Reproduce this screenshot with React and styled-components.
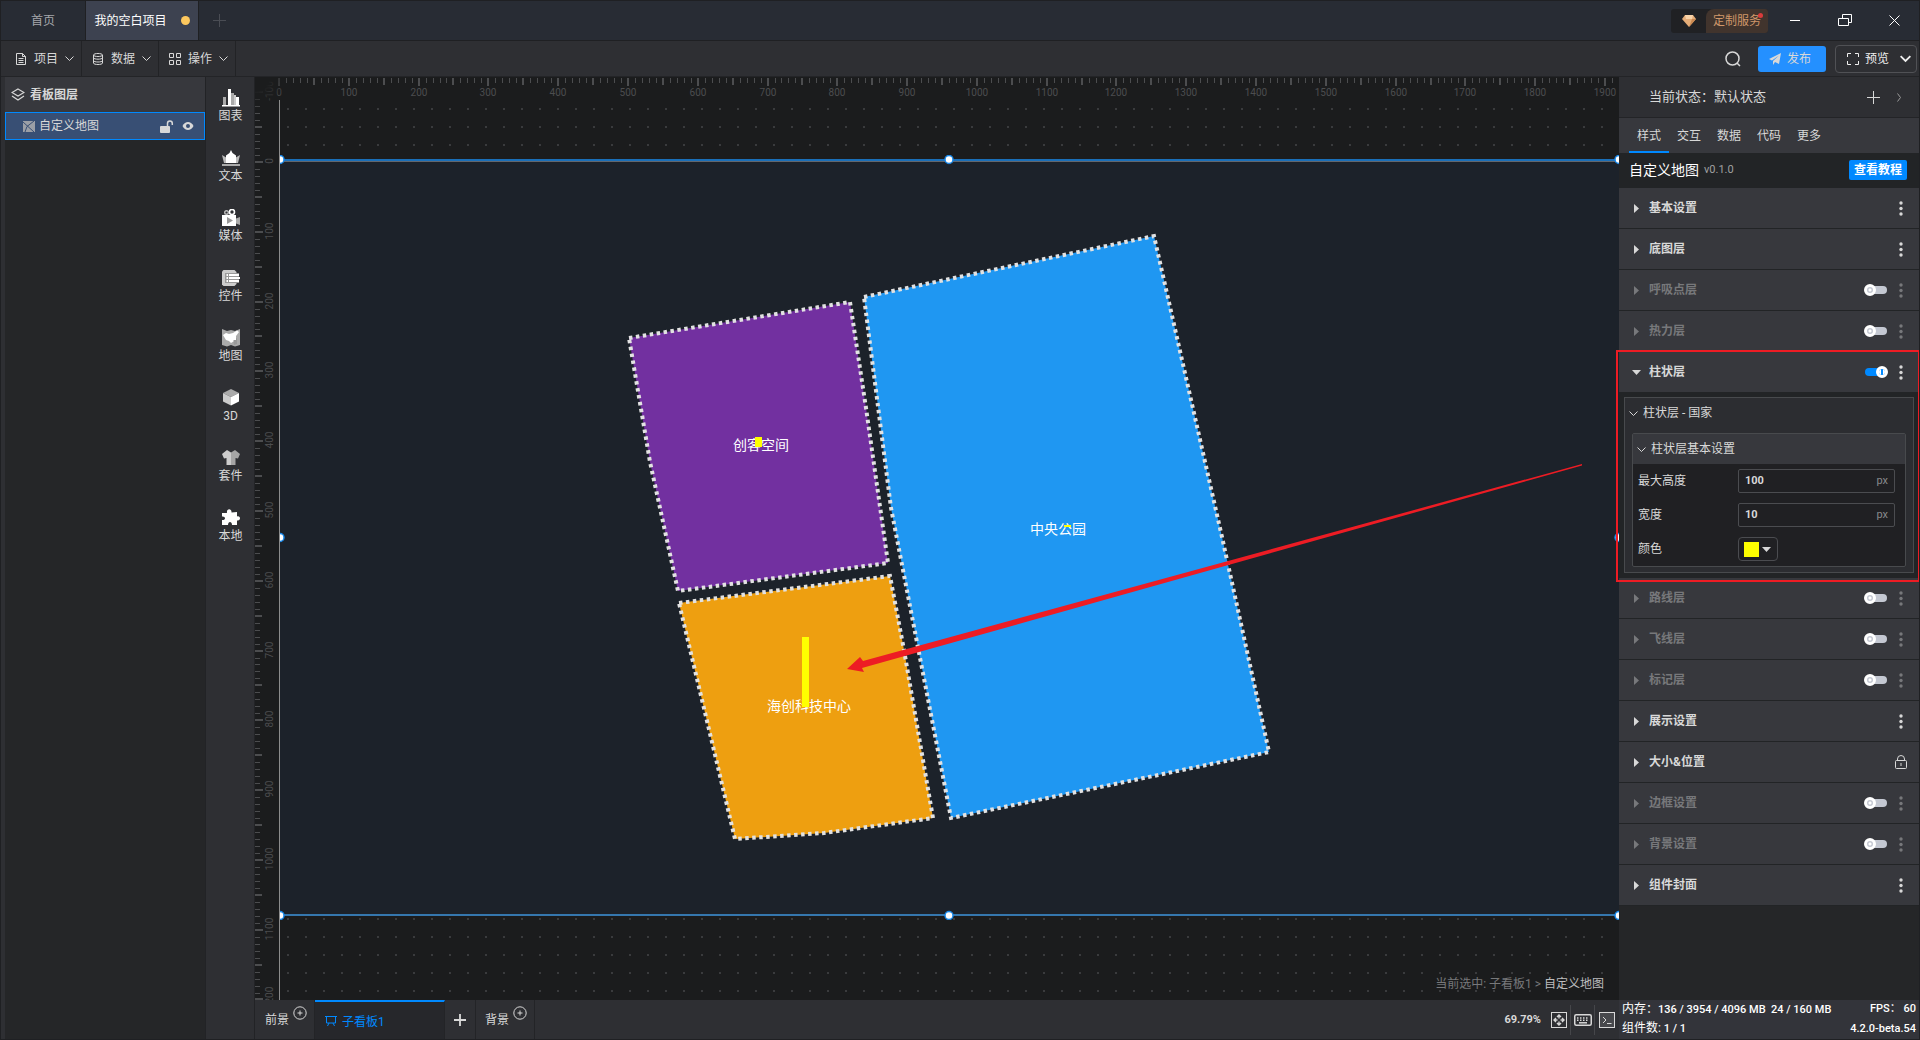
import React, { useState } from 'react'
import styled, { createGlobalStyle, css } from 'styled-components'

const GlobalStyle = createGlobalStyle`
  *, ::before, ::after {
    box-sizing: border-box;
  }

  body {
    margin: 0;
    background: #1f2023;
    color: #d8d8d8;
    font-family: Roboto, "Noto Sans CJK SC", sans-serif;
    font-size: 12px;
    line-height: 16px;
  }

  button, input {
    margin: 0;
    padding: 0;
    border: 0;
    background: none;
    color: inherit;
    font: inherit;
  }

  svg {
    display: block;
    flex: none;
  }
`

const Window = styled.div`
  display: flex;
  flex-direction: column;
  height: 100vh;
  border: 1px solid #1f2023;
  background: #2e2f33;
  overflow: hidden;
`

/* title bar */

const TitleBar = styled.header`
  display: flex;
  align-items: center;
  flex: none;
  height: 40px;
  border-bottom: 1px solid #1f2023;
  background: #282c34;
`

const WindowTab = styled.button`
  display: flex;
  align-items: center;
  justify-content: center;
  gap: 14px;
  align-self: stretch;
  width: ${p => p.$active ? 113 : 85}px;
  border-right: 1px solid #1f2023;
  background: ${p => p.$active ? '#3d4250' : 'transparent'};
  color: ${p => p.$active ? '#fff' : '#a5a7ab'};
`

const UnsavedDot = styled.span`
  width: 9px;
  height: 9px;
  border-radius: 50%;
  background: #fdc85e;
`

const IconButton = styled.button`
  display: flex;
  align-items: center;
  justify-content: center;
  width: ${p => p.$w || 24}px;
  height: 24px;
  color: ${p => p.$color || '#d8d8d8'};
`

const Spacer = styled.div`
  flex: 1;
`

const ServiceButton = styled.button`
  position: relative;
  display: flex;
  align-items: stretch;
  width: 97px;
  height: 24px;
  margin-right: 2px;
  border-radius: 3px;
  background: #202124;
  color: #d0976a;

  svg {
    margin: 4px 10px 4px 11px;
  }

  span {
    flex: 1;
    border-radius: 8px 3px 3px 0;
    background: #41342d;
    line-height: 25px;
  }
`

const RedDot = styled.i`
  position: absolute;
  top: 4px;
  right: 5px;
  width: 5px;
  height: 5px;
  border-radius: 50%;
  background: #d93b3b;
`

/* menu bar */

const MenuBar = styled.nav`
  display: flex;
  align-items: center;
  flex: none;
  height: 36px;
  border-bottom: 1px solid #232427;
  background: #2e2f33;
`

const MenuButton = styled.button`
  display: flex;
  align-items: center;
  align-self: stretch;
  gap: 7px;
  width: ${p => p.$first ? 81 : 77}px;
  padding-left: ${p => p.$first ? 13 : 9}px;
  border-right: 1px solid #222326;
`

const PublishButton = styled.button`
  display: flex;
  align-items: center;
  gap: 6px;
  width: 68px;
  height: 26px;
  margin: 0 9px 0 13px;
  padding-left: 11px;
  border-radius: 3px;
  background: #2490ff;
`

const PreviewButton = styled.button`
  display: flex;
  align-items: center;
  width: 82px;
  height: 28px;
  margin-right: 2px;
  padding-left: 11px;
  gap: 6px;
  border: 1px solid #505155;
  border-radius: 4px;
  color: #eee;

  span {
    width: 29px;
    text-align: left;
  }
`

/* body */

const Body = styled.div`
  display: flex;
  flex: 1;
  min-height: 0;
`

const Layers = styled.aside`
  flex: none;
  width: 201px;
  margin-left: 4px;
  border-right: 1px solid #222326;
  background: #252628;
`

const LayersTitle = styled.h2`
  display: flex;
  align-items: center;
  gap: 5px;
  height: 35px;
  margin: 0;
  padding-left: 6px;
  background: #37383d;
  font-size: 12px;
  font-weight: 700;
`

const LayerRow = styled.div`
  display: flex;
  align-items: center;
  height: 28px;
  padding: 0 10px 0 17px;
  border: 1px solid #0089ff;
  background: #384f74;

  span {
    flex: 1;
    margin-left: 4px;
  }

  button + button {
    margin-left: 8px;
  }
`

const LayerButton = styled.button`
  color: #d8d8d8;
`

const Rail = styled.nav`
  display: flex;
  flex-direction: column;
  flex: none;
  width: 49px;
  padding-left: 1px;
  border-right: 1px solid #222326;
  background: #2e2f33;
`

const RailButton = styled.button`
  display: flex;
  flex-direction: column;
  align-items: center;
  gap: 1px;
  height: 60px;
  padding-top: 12px;
`

const Center = styled.main`
  display: flex;
  flex-direction: column;
  flex: 1;
  min-width: 0;
`

const Workspace = styled.div`
  display: grid;
  grid-template-columns: 24px minmax(0, 1fr);
  grid-template-rows: 23px minmax(0, 1fr);
  flex: 1;
  min-height: 0;
  overflow: hidden;
  background: #1b1c1d;
`

const TopRuler = styled.svg`
  grid-area: 1 / 1 / 2 / 3;
  width: 100%;
  height: 23px;
`

const SideRuler = styled.svg`
  grid-area: 1 / 1 / 3 / 2;
  width: 24px;
  height: 100%;
`

const RulerCorner = styled.div`
  grid-area: 1 / 1 / 2 / 2;
  z-index: 1;
  width: 40px;
  height: 40px;
  background: radial-gradient(circle at 0 0, #1b1c1d 14px, transparent 34px);
`

const Stage = styled.div`
  position: relative;
  grid-area: 2 / 2 / 3 / 3;
  padding-top: 55px;
  border-left: 1px solid #8c8c8c;
  background: radial-gradient(circle at 8px 9px, #3a3b3d 1px, transparent 1px) 0 0 / 18px 18px;
  overflow: hidden;
`

const Breadcrumb = styled.p`
  position: absolute;
  right: 15px;
  bottom: 8px;
  margin: 0;
  color: #77787a;

  b {
    color: #bdbdbd;
    font-weight: 400;
  }
`

const BoardBar = styled.footer`
  display: flex;
  flex: none;
  height: 39px;
  background: #2e2f33;
`

const BoardTab = styled.button`
  display: flex;
  align-items: center;
  gap: ${p => p.$active ? 5 : 4}px;
  width: ${p => p.$w}px;
  padding-left: ${p => p.$pad || 0}px;
  border-right: 1px solid #232427;
  ${p => p.$center && css`justify-content: center;`}
  ${p => p.$active && css`
    border-top: 2px solid #0089ff;
    background: #26272b;
    color: #0089ff;
  `}

  svg + span {
    padding-top: 2px;
  }

  span + svg {
    margin-top: -14px;
  }
`

const ZoomLevel = styled.span`
  align-self: center;
  margin-right: 6px;
  font-size: 11px;
  font-weight: 700;
`

const FooterButton = styled.button`
  display: flex;
  align-items: center;
  justify-content: center;
  align-self: center;
  width: 24px;
  height: 30px;
  border-right: ${p => p.$last ? 0 : 1}px solid #45464a;
`

/* right hand panel */

const Inspector = styled.aside`
  display: flex;
  flex-direction: column;
  flex: none;
  width: 300px;
  background: #252628;
`

const StateRow = styled.div`
  display: flex;
  align-items: center;
  flex: none;
  height: 41px;
  padding: 0 13px 0 30px;
  border-bottom: 1px solid #232427;
  background: #2e2f33;
  font-size: 13px;
`

const Tabs = styled.div`
  display: flex;
  flex: none;
  height: 35px;
  padding-left: 10px;
  background: #37383d;
`

const Tab = styled.button`
  width: 40px;
  padding-top: 2px;
  border-bottom: 2px solid ${p => p.$active ? '#0089ff' : 'transparent'};
`

const ComponentTitle = styled.div`
  display: flex;
  align-items: center;
  flex: none;
  height: 35px;
  padding: 0 12px 2px 10px;
  background: #222426;

  strong {
    color: #fff;
    font-size: 14px;
    font-weight: 400;
  }

  small {
    flex: 1;
    margin-left: 5px;
    color: #a0a0a0;
    font-size: 11px;
  }
`

const TutorialButton = styled.button`
  width: 58px;
  height: 20px;
  border-radius: 2px;
  background: #0089ff;
  color: #fff;
  font-weight: 700;
`

const Section = styled.section`
  position: relative;
  flex: none;
`

const SectionHead = styled.div`
  display: flex;
  align-items: center;
  height: ${p => p.$open ? 40 : 41}px;
  padding-right: 11px;
  border-bottom: ${p => p.$open ? 0 : 1}px solid #222426;
  background: #37383d;
  color: ${p => p.$off ? '#77787b' : '#d8d8d8'};
`

const SectionToggle = styled.button`
  display: flex;
  align-items: center;
  flex: 1;
  gap: 8px;
  height: 100%;
  padding-left: 13px;
  font-weight: 700;
`

const Switch = styled.input.attrs({ type: 'checkbox' })`
  appearance: none;
  display: flex;
  align-items: center;
  width: 24px;
  height: 12px;
  margin-right: 6px;

  &::before {
    content: "";
    flex: none;
    width: 22px;
    height: 8px;
    margin-left: 1px;
    border-radius: 4px;
    background: #c4c8d2;
  }

  &::after {
    content: "";
    flex: none;
    width: 12px;
    height: 12px;
    margin-left: -23px;
    border: 3px solid #fff;
    border-radius: 50%;
    background: radial-gradient(#fff 1px, #c4c8d2 2px, #c4c8d2 3px, #fff 4px) padding-box;
  }

  &:checked::before {
    background: #0089ff;
  }

  &:checked::after {
    margin-left: -11px;
    background: linear-gradient(90deg, #fff 2px, #0089ff 2px, #0089ff 4px, #fff 4px) padding-box;
  }
`

const MoreButton = styled.button`
  display: flex;
  justify-content: center;
  width: 14px;
`

const Highlight = styled.div`
  position: absolute;
  inset: -2px -1px -4px -3px;
  border: 2px solid #ed1c24;
  pointer-events: none;
  z-index: 2;
`

const SectionBody = styled.div`
  padding: 5px;
  background: #222426;
`

const Group = styled.div`
  padding: 0 7px 5px;
  border: 1px solid #484a4d;
  background: #2c2d31;
`

const GroupHead = styled.button`
  display: flex;
  align-items: center;
  gap: 5px;
  width: 100%;
  height: 30px;
  padding-left: 4px;
  ${p => p.$inner ? css`background: #37383d;` : css`
    margin: 0 0 5px -7px;
  `}
`

const SubGroup = styled.div`
  border: 1px solid #484a4d;
  border-radius: 2px;
  background: #202023;
`

const FormRow = styled.div`
  display: flex;
  align-items: center;
  height: 34px;
  padding: 0 10px 0 5px;

  label {
    width: 100px;
  }
`

const NumberBox = styled.span`
  display: flex;
  align-items: center;
  flex: 1;
  height: 24px;
  padding: 0 6px;
  border: 1px solid #4b4c50;
  border-radius: 2px;
  color: #88898c;
  font-size: 11px;

  input {
    flex: 1;
    width: 40px;
    outline: 0;
    color: #d8d8d8;
    font-weight: 700;
  }
`

const ColorButton = styled.button`
  display: flex;
  align-items: center;
  gap: 3px;
  width: 40px;
  height: 24px;
  padding-left: 5px;
  border: 1px solid #4b4c50;
  border-radius: 4px;
`

const Swatch = styled.i`
  width: 15px;
  height: 15px;
  background: ${p => p.$color};
`

const Stats = styled.dl`
  display: grid;
  grid-template-columns: 1fr auto;
  grid-template-rows: 18px 21px;
  align-items: center;
  flex: none;
  height: 39px;
  margin: auto 0 0;
  padding: 0 3px;
  background: #33343a;
  color: #fff;
  font-size: 11px;
  font-weight: 500;
  white-space: pre;

  dt, dd {
    margin: 0;
    text-align: right;
  }

  dt {
    text-align: left;
  }

  span {
    font-size: 12px;
    font-weight: 400;
  }
`

/* icons */

const Chevron = ({ size = 9, width = 1 }) => (
  <svg width={size} height={size} viewBox="0 0 9 9" fill="none" stroke="currentColor" strokeWidth={width}>
    <path d="M0.5 2.5 4.5 6.5 8.5 2.5" />
  </svg>
)

const Caret = ({ open }) => (
  <svg width="9" height="9" viewBox="0 0 9 9" fill="currentColor">
    <path d={open ? 'M0 2h9L4.5 7z' : 'M2 0v9l5-4.5z'} />
  </svg>
)

const Plus = ({ size = 13, width = 1 }) => (
  <svg width={size} height={size} viewBox="0 0 13 13" stroke="currentColor" strokeWidth={width}>
    <path d="M6.5 0v13M0 6.5h13" />
  </svg>
)

const Dots = () => (
  <svg width="4" height="15" viewBox="0 0 4 15" fill="currentColor">
    <circle cx="2" cy="2" r="1.7" />
    <circle cx="2" cy="7.5" r="1.7" />
    <circle cx="2" cy="13" r="1.7" />
  </svg>
)

const Lock = () => (
  <svg width="12" height="15" viewBox="0 0 12 15" fill="none" stroke="currentColor">
    <rect x="0.5" y="5.5" width="11" height="8" rx="1" />
    <path d="M2.5 5.5V4a3.5 3.5 0 0 1 7 0v1.5M6 8v3" />
  </svg>
)

const CirclePlus = () => (
  <svg width="14" height="14" viewBox="0 0 14 14" fill="none" stroke="#d8d8d8">
    <circle cx="7" cy="7" r="6.2" />
    <path d="M7 4.5v5M4.5 7h5" />
  </svg>
)

const menuItems = [
  {
    label: '项目',
    icon: <path d="M2.5 1.5h6l3 3v8h-9zM8.5 1.5v3h3M4.5 6.5h5M4.5 8.5h5M4.5 10.5h5" />,
  },
  {
    label: '数据',
    icon: <path d="M2.5 3c0-2 9-2 9 0s-9 2-9 0v8c0 2 9 2 9 0v-8M2.5 5.7c0 2 9 2 9 0M2.5 8.5c0 2 9 2 9 0" />,
  },
  {
    label: '操作',
    icon: <path d="M1.5 1.5h4v4h-4zM8.5 1.5h4v4h-4zM1.5 8.5h4v4h-4zM8.5 8.5h4v4h-4z" />,
  },
]

const railItems = [
  {
    label: '图表',
    icon: <>
      <path fill="#aaa" d="M1 8h3v8H1zM9 4h3v12H9z" />
      <path fill="#fff" d="M6 0h3v16H6zM14 8h3v8h-3zM0 16h18v1.5H0z" />
      <path fill="#ccc" d="M12 6h2v10h-2z" />
    </>,
  },
  {
    label: '文本',
    icon: <>
      <path fill="#bbb" d="M0 6 5 9 5 14H2zM18 6l-5 3v5h3z" />
      <path fill="#fff" d="M9 1 10.5 4 14 6.5V14H4V6.5L7.5 4z" />
      <path fill="#aaa" d="M0 15h18v2H0z" />
    </>,
  },
  {
    label: '媒体',
    icon: <>
      <circle cx="4.5" cy="3.5" r="1.8" fill="none" stroke="#bbb" strokeWidth="1.4" />
      <circle cx="10" cy="3" r="2.5" fill="none" stroke="#fff" strokeWidth="1.6" />
      <path fill="#fff" d="M0 6h14v11H0z" />
      <path fill="#aaa" d="M14 9.5 18 8v8l-4-1.5z" />
      <path fill="#999" d="M5 8v7l6-3.5z" />
    </>,
  },
  {
    label: '控件',
    icon: <>
      <path fill="#ccc" d="M1.5 1h11l2 2v12l-2 2h-11L0 15.5v-13z" />
      <path fill="#999" d="M3 4h14v10H3z" />
      <path fill="#fff" d="M4.5 5h1.5v2H4.5zM7 5h10v2H7zM4.5 8h1.5v2H4.5zM7 8h11v2H7zM4.5 11h1.5v2H4.5zM7 11h10v2H7z" />
    </>,
  },
  {
    label: '地图',
    icon: <>
      <path fill="#aaa" d="M0 0 5 2 9 1 13 2 18 0V16L13 17.5 9 16 5 17.5 0 16z" />
      <path fill="#999" d="M11 11 15 9v6l-3 1z" />
      <path fill="#fff" d="M1 6 4 4 7 5 11 4 15 1.5 17 3 14 7v4l-3 0 1 1-3 2-2-2-3-1z" />
    </>,
  },
  {
    label: '3D',
    icon: <>
      <path fill="#aaa" d="M9 0 17 4 9 8 1 4z" />
      <path fill="#ccc" d="M1 4 9 8v8.5l-8-4z" />
      <path fill="#fff" d="M17 4 9 8v8.5l8-4z" />
    </>,
  },
  {
    label: '套件',
    icon: <>
      <path fill="#ccc" d="M5 1 9 3.5V16H4.5V9L2 9.5 0 5z" />
      <path fill="#a5a5a5" d="M13 1 9 3.5V16h4.5V9l2.5.5L18 5z" />
    </>,
  },
  {
    label: '本地',
    icon: <path fill="#fff" d="M0 4h5c-1-5 5-5 4.5-0.5L15 3v4.5c4-1.5 4 5 0 4V16h-5c0-4-4-4-4 0H0v-5c4 0.5 4-4 0-3.5z" />,
  },
]

const sections = [
  { title: '基本设置' },
  { title: '底图层' },
  { title: '呼吸点层', enabled: false },
  { title: '热力层', enabled: false },
  { title: '柱状层', enabled: true, open: true },
  { title: '路线层', enabled: false },
  { title: '飞线层', enabled: false },
  { title: '标记层', enabled: false },
  { title: '展示设置' },
  { title: '大小&位置', locked: true },
  { title: '边框设置', enabled: false },
  { title: '背景设置', enabled: false },
  { title: '组件封面' },
]

const STEP = 6.979
const range = (from, to) => Array.from({ length: to - from + 1 }, (_, i) => from + i)
const tickLength = i => (i % 10 === 0 ? 8 : i % 5 === 0 ? 7 : 5)

function HorizontalRuler() {
  return (
    <TopRuler fill="#4c4d4f" fontSize="10" textAnchor="middle">
      {range(0, 195).map(i => {
        const x = Math.round(24 + i * STEP)
        return (
          <React.Fragment key={i}>
            <rect x={i % 5 ? x : x - 1} y="1" width={i % 5 ? 1 : 2} height={tickLength(i)} />
            {i % 10 === 0 && <text x={x} y="19">{i * 10}</text>}
          </React.Fragment>
        )
      })}
    </TopRuler>
  )
}

function VerticalRuler() {
  return (
    <SideRuler fill="#4c4d4f" fontSize="10" textAnchor="middle">
      {range(-11, 120).map(i => {
        const y = Math.round(85 + i * STEP)
        return (
          <React.Fragment key={i}>
            <rect x="0" y={i % 5 ? y : y - 1} width={tickLength(i)} height={i % 5 ? 1 : 2} />
            {i % 10 === 0 && <text transform={`translate(18 ${y - 1}) rotate(-90)`}>{i * 10}</text>}
          </React.Fragment>
        )
      })}
    </SideRuler>
  )
}

const regions = [
  { name: '创客空间', color: '#7230a0', points: '629,338 850,302 866,408 888,563 678,591 650,462', x: 761, y: 450, bar: [755, 437, 10] },
  { name: '中央公园', color: '#1f97f2', points: '864,297 1154,236 1222,537 1269,752 951,818 891,508', x: 1058, y: 534, bar: [1064, 525, 2] },
  { name: '海创科技中心', color: '#ee9f10', points: '679,603 890,576 904,650 933,818 824,833 735,839', x: 809, y: 711, bar: [802, 637, 70] },
]

function MapBoard() {
  return (
    <svg width="1340" height="765" viewBox="280 155 1340 765">
      <rect x="280" y="161" width="1340" height="754" fill="#1c222a" />
      <rect x="280" y="159" width="1340" height="2" fill="#1a6fb8" />
      <rect x="280" y="161" width="1340" height="1" fill="#62676e" />
      <rect x="280" y="914" width="1340" height="2" fill="#3577ae" />
      {regions.map(r => (
        <g key={r.name}>
          <polygon points={r.points} fill={r.color} stroke="#e2e2e2" strokeWidth="4" strokeDasharray="3.5 3.5" />
          <text x={r.x} y={r.y} fill="#fff" fontSize="14" textAnchor="middle">{r.name}</text>
          <rect x={r.bar[0]} y={r.bar[1]} width="7" height={r.bar[2]} fill="#ff0" />
        </g>
      ))}
      <path fill="#ed1c24" d="M847 669 860 657 863 661 1582 464 1582 465.5 862 668 864 672z" />
      {[[280, 159], [949, 159], [1619, 159], [280, 537], [1619, 537], [280, 915], [949, 915], [1619, 915]].map(([x, y]) => (
        <circle key={`${x}-${y}`} cx={x} cy={y + 0.5} r="4" fill="#fff" stroke="#1787e8" strokeWidth="1.5" />
      ))}
    </svg>
  )
}

function BarSettings() {
  return (
    <SectionBody>
      <Group>
        <GroupHead><Chevron />柱状层 - 国家</GroupHead>
        <SubGroup>
          <GroupHead $inner><Chevron />柱状层基本设置</GroupHead>
          <FormRow>
            <label htmlFor="max-height">最大高度</label>
            <NumberBox><input id="max-height" defaultValue="100" />px</NumberBox>
          </FormRow>
          <FormRow>
            <label htmlFor="bar-width">宽度</label>
            <NumberBox><input id="bar-width" defaultValue="10" />px</NumberBox>
          </FormRow>
          <FormRow>
            <label htmlFor="bar-color">颜色</label>
            <ColorButton id="bar-color"><Swatch $color="#ff0" /><Caret open /></ColorButton>
          </FormRow>
        </SubGroup>
      </Group>
    </SectionBody>
  )
}

function SettingsSection({ title, enabled, open, locked }) {
  const [on, setOn] = useState(enabled)
  return (
    <Section>
      <SectionHead $open={open} $off={on === false}>
        <SectionToggle aria-expanded={!!open}><Caret open={open} />{title}</SectionToggle>
        {enabled !== undefined && (
          <Switch aria-label={title} checked={on} onChange={() => setOn(!on)} />
        )}
        <MoreButton aria-label="更多">{locked ? <Lock /> : <Dots />}</MoreButton>
      </SectionHead>
      {open && <BarSettings />}
      {open && <Highlight />}
    </Section>
  )
}

export default function App() {
  return (
    <Window>
      <GlobalStyle />
      <TitleBar>
        <WindowTab>首页</WindowTab>
        <WindowTab $active>我的空白项目<UnsavedDot /></WindowTab>
        <IconButton $w="40" $color="#4a4d54" aria-label="新建"><Plus /></IconButton>
        <Spacer />
        <ServiceButton>
          <svg width="14" height="16" viewBox="0 0 14 16">
            <path fill="#e5ad78" d="M3 2h8l3 4-7 8-7-8z" />
            <path fill="#f9d3a8" d="M3 2h8l-1 4H4z" />
            <path fill="#c98850" d="M10 6h4l-7 8z" />
          </svg>
          <span>定制服务</span>
          <RedDot />
        </ServiceButton>
        <IconButton $w="50" $color="#fff" aria-label="最小化">
          <svg width="10" height="10" stroke="currentColor"><path d="M0 4.5h10" /></svg>
        </IconButton>
        <IconButton $w="50" $color="#fff" aria-label="还原">
          <svg width="14" height="13" fill="none" stroke="currentColor">
            <path d="M0.5 4.5h10v7h-10zM4.5 4V0.5h9v8h-3" />
          </svg>
        </IconButton>
        <IconButton $w="49" $color="#fff" aria-label="关闭">
          <svg width="11" height="11" stroke="currentColor"><path d="M0.5 0.5l10 10M10.5 0.5l-10 10" /></svg>
        </IconButton>
      </TitleBar>

      <MenuBar>
        {menuItems.map((m, i) => (
          <MenuButton key={m.label} $first={i === 0}>
            <svg width="13" height="14" fill="none" stroke="currentColor">{m.icon}</svg>
            {m.label}
            <Chevron />
          </MenuButton>
        ))}
        <Spacer />
        <IconButton aria-label="搜索">
          <svg width="16" height="16" fill="none" stroke="currentColor" strokeWidth="1.5">
            <circle cx="7.5" cy="7.5" r="6.5" />
            <path d="M12 12l3 3" />
          </svg>
        </IconButton>
        <PublishButton>
          <svg width="12" height="12" fill="currentColor">
            <path d="M12 0 10 11 6 9 4 12V8L10 2.5 3 7.5 0 6z" />
          </svg>
          发布
        </PublishButton>
        <PreviewButton>
          <svg width="12" height="12" fill="none" stroke="currentColor">
            <path d="M0.5 4V0.5H4M8 0.5h3.5V4M11.5 8v3.5H8M4 11.5H0.5V8" />
          </svg>
          <span>预览</span>
          <Chevron size={11} width={1.5} />
        </PreviewButton>
      </MenuBar>

      <Body>
        <Layers>
          <LayersTitle>
            <svg width="14" height="13" fill="none" stroke="currentColor" strokeWidth="1.2">
              <path d="M7 1 13 4.5 7 8 1 4.5zM1 8l6 4 6-4" />
            </svg>
            看板图层
          </LayersTitle>
          <LayerRow>
            <svg width="12" height="11">
              <path fill="#9b9fa6" d="M0 0h12v11H0z" />
              <path stroke="#384f74" fill="none" d="M0 1l11 10M11 0 4 5.5 2 11" />
            </svg>
            <span>自定义地图</span>
            <LayerButton aria-label="解锁">
              <svg width="14" height="13" fill="none" stroke="currentColor" strokeWidth="1.5">
                <rect x="0" y="6" width="10" height="7" rx="1" fill="currentColor" stroke="none" />
                <path d="M7.5 6V3.5a2.4 2.4 0 0 1 4.8 0V5" />
              </svg>
            </LayerButton>
            <LayerButton aria-label="显示">
              <svg width="12" height="10">
                <path fill="currentColor" d="M0.5 5C3-0.3 9-0.3 11.5 5 9 10.3 3 10.3 0.5 5z" />
                <circle cx="6" cy="5" r="2" fill="#384f74" />
              </svg>
            </LayerButton>
          </LayerRow>
        </Layers>

        <Rail>
          {railItems.map(r => (
            <RailButton key={r.label}>
              <svg width="18" height="18">{r.icon}</svg>
              {r.label}
            </RailButton>
          ))}
        </Rail>

        <Center>
          <Workspace>
            <HorizontalRuler />
            <VerticalRuler />
            <RulerCorner />
            <Stage>
              <MapBoard />
              <Breadcrumb>当前选中: 子看板1 &gt; <b>自定义地图</b></Breadcrumb>
            </Stage>
          </Workspace>
          <BoardBar>
            <BoardTab $w="60" $pad="10"><span>前景</span><CirclePlus /></BoardTab>
            <BoardTab $w="130" $pad="10" $active>
              <svg width="12" height="12" fill="none" stroke="currentColor">
                <path d="M0 1.5h12M1.5 1.5v6.5h9V1.5M4 8l-1.5 3M8 8l1.5 3" />
              </svg>
              <span>子看板1</span>
            </BoardTab>
            <BoardTab $w="31" $center aria-label="添加看板"><Plus size={12} width={2} /></BoardTab>
            <BoardTab $w="59" $pad="9"><span>背景</span><CirclePlus /></BoardTab>
            <Spacer />
            <ZoomLevel>69.79%</ZoomLevel>
            <FooterButton aria-label="适应画布">
              <svg width="16" height="16" fill="none" stroke="currentColor">
                <rect x="0.5" y="0.5" width="15" height="15" />
                <path strokeWidth="1.4" d="M8 3v3.5M8 9.5v3.5M3 8h3.5M9.5 8h3.5M6 5 8 3l2 2M6 11l2 2 2-2M5 6 3 8l2 2M11 6l2 2-2 2" />
              </svg>
            </FooterButton>
            <FooterButton aria-label="快捷键">
              <svg width="18" height="12" fill="none" stroke="currentColor" strokeWidth="1.5">
                <rect x="0.75" y="0.75" width="16.5" height="10.5" rx="1.5" />
                <path strokeDasharray="1.5 1.5" d="M3 4h12M3 6.3h12" />
                <path d="M5 8.8h8" />
              </svg>
            </FooterButton>
            <FooterButton $last aria-label="控制台">
              <svg width="16" height="16" fill="none" stroke="currentColor">
                <rect x="0.5" y="0.5" width="15" height="15" fill="#47484c" />
                <path d="M4 5l3 3-3 3M8 11.5h4.5" />
              </svg>
            </FooterButton>
          </BoardBar>
        </Center>

        <Inspector>
          <StateRow>
            当前状态：默认状态
            <Spacer />
            <IconButton aria-label="添加状态"><Plus /></IconButton>
            <svg width="21" height="9" fill="none" stroke="#9a9a9a"><path d="M12.5 0.5l3 4-3 4" /></svg>
          </StateRow>
          <Tabs>
            {['样式', '交互', '数据', '代码', '更多'].map((t, i) => (
              <Tab key={t} $active={i === 0}>{t}</Tab>
            ))}
          </Tabs>
          <ComponentTitle>
            <strong>自定义地图</strong>
            <small>v0.1.0</small>
            <TutorialButton>查看教程</TutorialButton>
          </ComponentTitle>
          {sections.map(s => <SettingsSection key={s.title} {...s} />)}
          <Stats>
            <dt><span>内存：</span>136 / 3954 / 4096 MB  24 / 160 MB</dt>
            <dd>FPS： 60</dd>
            <dt><span>组件数:</span> 1 / 1</dt>
            <dd>4.2.0-beta.54</dd>
          </Stats>
        </Inspector>
      </Body>
    </Window>
  )
}
